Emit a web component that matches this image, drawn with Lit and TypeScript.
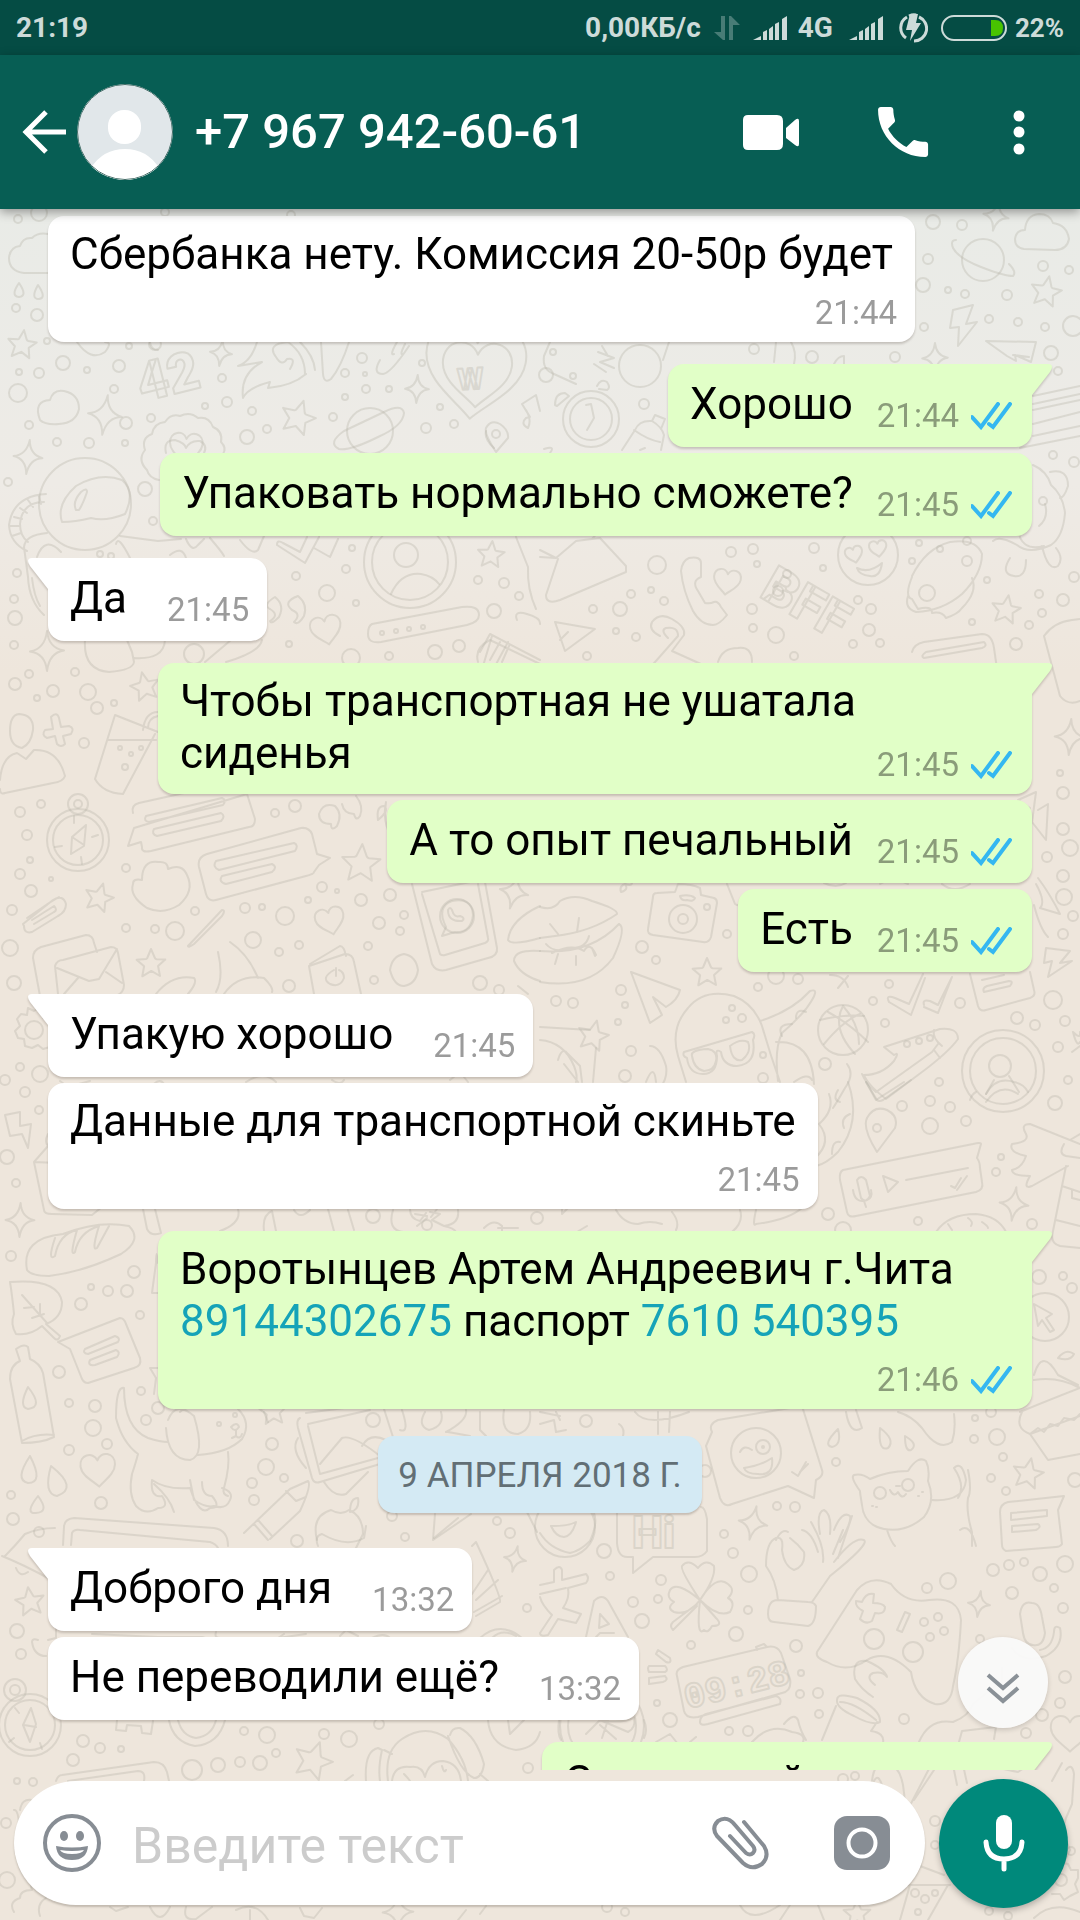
import { LitElement, html, svg, css } from "lit";
import { customElement, property } from "lit/decorators.js";
import { classMap } from "lit/directives/class-map.js";

type Part = string | { tel: string };

interface Message {
  out: boolean;
  text: Part[];
  time: string;
  tail?: boolean;
  stacked?: boolean;
  multiline?: boolean;
}

const BEFORE: Message[] = [
  { out: false, text: ["Сбербанка нету. Комиссия 20-50р будет"], time: "21:44", stacked: true },
  { out: true, text: ["Хорошо"], time: "21:44", tail: true },
  { out: true, text: ["Упаковать нормально сможете?"], time: "21:45" },
  { out: false, text: ["Да"], time: "21:45", tail: true },
  { out: true, text: ["Чтобы транспортная не ушатала сиденья"], time: "21:45", tail: true, multiline: true },
  { out: true, text: ["А то опыт печальный"], time: "21:45" },
  { out: true, text: ["Есть"], time: "21:45" },
  { out: false, text: ["Упакую хорошо"], time: "21:45", tail: true },
  { out: false, text: ["Данные для транспортной скиньте"], time: "21:45", stacked: true },
  {
    out: true,
    text: ["Воротынцев Артем Андреевич г.Чита ", { tel: "89144302675" }, " паспорт ", { tel: "7610 540395" }],
    time: "21:46",
    tail: true,
    stacked: true,
  },
];

const AFTER: Message[] = [
  { out: false, text: ["Доброго дня"], time: "13:32", tail: true },
  { out: false, text: ["Не переводили ещё?"], time: "13:32" },
  { out: true, text: ["Ссылку найду"], time: "13:35", tail: true },
];

/* Wallpaper: small rings, [x, y, radius] */
const RINGS: number[][] = [
  [18,219,4],[39,213,8],[165,212,4],[291,215,4],[16,308,4],[37,315,6],[47,341,3],[129,346,3],[155,344,6],[63,363,7],
  [87,370,3],[119,366,6],[19,372,3],[39,373,5],[18,393,9],[114,389,4],[29,425,4],[57,442,4],[89,443,5],[125,443,3],
  [126,423,6],[151,418,4],[205,406,3],[227,402,5],[252,411,4],[222,378,4],[362,358,5],[365,374,2],[345,373,4],[345,397,3],
  [366,389,4],[389,389,3],[422,363,3],[440,407,3],[454,424,4],[426,428,5],[333,417,4],[267,429,4],[247,437,7],[8,482,4],
  [145,489,7],[153,521,4],[17,573,4],[14,599,4],[15,618,7],[14,645,4],[296,576,4],[327,593,8],[356,603,3],[352,548,3],
  [346,569,4],[289,644,3],[478,580,4],[504,583,5],[494,611,7],[519,596,4],[435,652,7],[459,646,6],[389,656,4],[194,654,10],
  [351,658,9],[933,222,7],[962,225,5],[928,259,5],[923,285,7],[948,290,3],[965,294,4],[1007,295,5],[1043,266,5],[1069,270,4],
  [989,319,4],[1018,322,4],[1045,327,4],[924,327,4],[1073,326,10],[1051,353,7],[1058,371,4],[895,357,5],[812,357,6],[754,349,5],
  [553,352,3],[546,375,7],[573,376,3],[644,404,5],[1053,455,4],[1074,462,5],[919,543,3],[940,549,3],[967,541,4],[967,561,5],
  [912,561,3],[814,548,5],[823,568,3],[753,549,5],[731,552,5],[757,564,3],[657,565,9],[631,594,4],[651,590,3],[664,601,4],
  [620,609,7],[593,609,4],[616,631,3],[636,637,4],[752,609,5],[753,628,4],[776,635,8],[869,630,6],[871,609,5],[858,600,4],
  [853,644,4],[880,643,4],[987,580,3],[1074,577,5],[1039,594,4],[1063,600,6],[1042,613,4],[1029,625,4],[972,622,3],[1016,644,6],
  [587,656,4],[794,656,4],[29,674,4],[15,684,6],[53,691,6],[37,698,3],[75,672,4],[88,692,8],[97,708,6],[114,703,3],
  [84,743,5],[20,812,5],[41,804,4],[27,835,5],[30,860,3],[20,874,5],[51,879,2],[31,891,6],[12,910,5],[126,868,4],
  [126,928,4],[155,929,4],[175,931,9],[195,911,4],[245,908,5],[262,907,3],[285,916,9],[253,940,8],[279,952,4],[299,945,4],
  [322,887,5],[337,891,2],[308,900,3],[361,900,6],[390,895,6],[379,923,6],[404,915,4],[400,931,4],[368,946,4],[374,980,4],
  [289,986,6],[480,983,7],[499,990,5],[10,948,8],[14,983,7],[20,1067,4],[40,1074,8],[5,1080,5],[25,1092,5],[295,806,6],
  [275,813,4],[727,934,4],[642,947,6],[656,960,4],[556,1001,5],[573,1003,5],[621,990,5],[625,1005,3],[618,1022,3],[631,1051,5],
  [625,1076,6],[763,1078,5],[763,1055,3],[776,976,8],[798,979,5],[758,987,4],[889,984,4],[873,1001,4],[885,1023,4],[825,1064,6],
  [939,1082,4],[960,1003,5],[1053,1000,9],[1017,1018,6],[1035,1025,5],[1065,1021,5],[1058,1047,5],[1068,1080,4],[1060,773,3],[1063,793,6],
  [1063,829,6],[1070,848,8],[1047,857,5],[1063,876,6],[1064,897,8],[1073,916,5],[1063,934,5],[742,1018,4],[732,1008,3],[726,1020,3],
  [39,1110,4],[7,1157,7],[16,1183,4],[11,1256,5],[134,1272,6],[91,1287,3],[108,1291,5],[127,1291,6],[81,1304,6],[140,1315,4],
  [59,1372,6],[69,1403,4],[95,1406,6],[93,1428,8],[141,1391,4],[146,1420,5],[158,1408,6],[107,1444,5],[69,1450,5],[11,1495,4],
  [13,1519,6],[101,1503,6],[272,1444,6],[266,1467,8],[252,1483,5],[284,1478,4],[254,1500,5],[373,1216,7],[373,1420,7],[392,1516,5],
  [497,1521,4],[510,1533,5],[537,1218,6],[902,1106,5],[930,1101,5],[950,1107,5],[930,1126,8],[966,1121,5],[1055,1103,7],[1001,1157,3],
  [996,1172,4],[828,1214,6],[918,1221,4],[1032,1224,5],[1039,1277,7],[1063,1276,4],[1072,1288,5],[586,1421,6],[991,1412,5],[975,1418,3],
  [974,1439,4],[997,1437,8],[1003,1457,4],[991,1478,4],[1006,1491,4],[836,1462,4],[777,1506,4],[795,1507,5],[724,1534,4],[1075,1480,7],
  [705,1471,6],[17,1631,7],[21,1654,5],[83,1741,6],[100,1748,5],[121,1749,3],[73,1760,6],[17,1781,3],[33,1782,4],[192,1770,10],
  [218,1765,7],[240,1762,5],[260,1763,7],[276,1753,4],[267,1735,8],[244,1731,4],[324,1734,5],[349,1739,8],[379,1724,5],[528,1768,5],
  [405,1537,4],[297,1541,6],[527,1608,4],[6,1823,5],[7,1880,8],[604,1551,7],[733,1553,5],[610,1576,4],[661,1580,5],[633,1602,5],
  [658,1599,4],[642,1621,7],[748,1610,4],[749,1574,8],[736,1634,7],[796,1646,6],[801,1673,3],[800,1694,4],[818,1693,5],[819,1714,4],
  [904,1719,5],[729,1731,4],[748,1731,5],[670,1720,7],[657,1703,3],[691,1645,4],[927,1588,5],[948,1581,8],[993,1570,6],[1009,1565,5],
  [1024,1562,4],[1040,1574,7],[1065,1564,8],[1054,1588,4],[1012,1593,6],[1063,1608,5],[980,1639,4],[1065,1677,6],[1060,1703,5],[1042,1715,6],
  [1026,1733,5],[924,1622,4],[938,1617,4],[944,1631,4],[930,1637,4],[874,1639,10],[913,1652,10],[607,1907,5],[625,1912,4],[935,1821,5],
  [843,1779,5],[855,1776,4],[935,1845,4],[915,1893,4],[925,1899,4],[989,1911,4],[1008,1916,4],[1071,1851,4],[918,1912,3],[935,1893,3],
];

/* [x, y, scale, rotation] */
const STARS = [
  [22,345,15,8],[298,418,18,18],[1046,292,16,12],[491,555,14,6],[145,687,15,-12],[361,864,20,4],[99,898,15,16],
  [151,964,15,0],[707,973,15,0],[593,1036,16,14],[1006,610,15,10],[1028,1474,16,12],[30,1602,15,-8],[313,1761,20,20],[273,1412,14,-4],[857,1914,14,0],
];
const SPARKLES = [
  [221,353,13,8],[105,415,20,8],[28,457,17,6],[417,389,14,3],[47,651,20,0],[20,1220,17,2],[1014,1204,17,8],
  [753,1523,17,12],[515,1559,13,12],[979,1604,13,8],[1070,737,18,4],[514,892,17,14],[996,216,15,12],[935,358,15,0],[398,1912,18,0],
];
const HEARTS = [
  [326,629,16,-12],[330,920,15,-14],[98,1469,18,-4],[727,581,14,8],[1070,1732,20,0],[186,447,17,4],[477,372,36,3],[475,368,52,6],[854,554,9,-14],[878,548,9,-8],
];

const STAR = "M0-1 .27-.38Q.3-.33.38-.32L.95-.3.47.13.6.8.02.46-.58.82-.46.15-.96-.28-.34-.34Q-.28-.35-.25-.4Z";
const SPARKLE = "M0-1Q.08-.15.85-.02Q.12.08 0 1Q-.1.12-.85.03Q-.1-.12 0-1Z";
const HEART = "M0-.48C.22-1.02 1-.86.96-.2.92.34.3.66 0 .98-.3.66-.92.34-.96-.2-1-.86-.22-1.02 0-.48Z";

const place = (list: number[][], d: string) =>
  list.map(([x, y, s, r]) => svg`<path d=${d} transform="translate(${x} ${y}) rotate(${r}) scale(${s})" />`);

const ART = [
  /* clouds, drops, bolt */
  "M48 273H24Q9 271 9 258 10 247 20 246 23 237 32 238 38 232 48 234",
  "M19 283q-9 13 0 14 9-1 0-14zM38 285q-8 14 1 14 8-1-1-14z",
  "M1024 249q-9-1-9-10 1-9 10-9 1-15 14-16 11 0 14 9 14 2 16 16-2 11-14 11z",
  "M953 310l20-5-7 19 11-2-19 24 1-19-9 1z",
  "M986 341l50 1-5 20-16-7 1 6-9-5zM1013 355l16 2",
  "M40 420q-7-19 10-20 3-11 14-9 15 3 15 18-3 14-20 15-14 1-19-4z",
  /* rocket flames and trail */
  "M257 342q-6 20-19 24l24-4q-22 12-19 36 4-10 27-16l-2 6q24-2 38-14M288 342q-22 2-12 15 6 10 11 2 10-2 3 10M288 342q17 12 17 32M300 342q14 14 15 28M321 342l2 32q1 10 8 5 10-12 18-37M77 342q14 20 28 10 8-10 0-10M150 342q1 8 8 8",
  "M380 360q-8 14 3 14 8-1 26-28M397 342q-8 14-3 12M405 344q-6 12-2 10",
  /* scalloped badge */
  "M159 480q-10-2-12-10-10-10-2-20-4-12 7-16 2-11 13-12 6-9 15-6 10-5 18 2 11-2 15 9 10 4 8 15 6 6 2 12M166 453q-3-13 9-13 10 3 11 8 4-8 14-7 8 4 4 12",
  /* music note, pins */
  "M528 428q-8-4-2-10l4-1-8-13 14-9 4 16M528 428q4-8-2-18M496 452q-12-18-10-24 5-9 14-4 9 6 8 14z",
  "M877 1152q-15-24-10-34 7-13 20-8 12 6 8 18zM494 448q-10-9-8-17",
  /* planets */
  "M339 449q-12-6 5-18l40-19q18-9 20 1-1 13-26 24-28 14-39 12z",
  "M956 240q-6 0-3 8 5 10 28 19 23 9 32 9 4-4-4-12",
  /* astronaut */
  "M62 522q-6-18 14-36 24-14 46-6 14 12 3 34-20 8-34 4-16 4-29 4zM76 510q-4-8 5-18 6-5 6 0-4 12-8 18zM46 494Q13 496 9 525q1 18 18 26M44 502q-22 0-24 22 0 12 8 18M39 496l2 8M28 500l5 7M20 508l7 5M14 517l8 2M10 526h9M12 536l9-3M120 536l38 5 23-2M130 558q-12-24-14-14M47 533q-22 2-23 14l4 30q1 24 16 38M37 557q8-22 24-5M32 578q2 18 8 28",
  "M170 555q12-10 16 3M186 539q6 14 12 6l6-6M210 538q12 14 14 18M240 540q12 16 18 10l6-14M277 545l28 18 14-26M277 545q0-6 6-2l17 9 7-15M314 548l16 9 8-18",
  "M516 537l12 30q-1 22 8 42",
  /* plus badge */
  "M550 342l-6 14q-2 14 10 18l22 10M669 342l-6 18M598 352l16 6-14 4 14 6M602 346l6 10M594 364l12 8",
  /* alarm clock */
  "M586 405l5-1 3 14-7 12M555 405q0-12 10-12l4 3-12 10zM597 386q4-8 10-4 4 6 0 8l-8-1",
  "M622 450l13-20q4-10 17-9 10 6 12 14l-3 15M652 421l3-6 10 4-4 10M634 430q14 10 26 12M640 450l5-2M544 449q12-4 6 4",
  "M776 342l-2 20M791 342q6 10 3 22M834 364q4-8 10-8v8",
  "M1033 396l47-10M1033 410l47-10M1033 424l47-12M1033 436l47-10M1020 448l60-12M1033 404l47-10",
  /* bird */
  "M1033 465q14 6 18 20 12 10 14 28-2 24-14 32-22 10-34 0-18-10-24-4M1050 472q18-4 18 14-4 12-8 12M1045 504q4 14-6 22M1018 528q2 24 26 18M1010 558q-10 16 4 18 12 2 12-16M1042 546q6 26 16 20 6-8-2-18",
  /* handset */
  "M689 558q12-2 12 5v14q-10 4-3 14l7 12q5 1 9-1 4-1 7 5l6 8q-8 10-14 10-12 0-20-14-10-20-12-40 1-10 8-13z",
  "M540 557l16 1 20-17 24-3 26 28v6l-66 28q-14 5-14-5l12-36M592 539l12-14M556 558l-16-8",
  "M555 622l40 7-30 22zM560 640l8-8",
  /* hanger and ticket */
  "M660 636q-12-6-8-14 8-10 20-3 14 8 12 16l-12 16 40 18M668 638q-8-8-2-10 12-2 12 8l-30 34",
  "M718 662q4-14 20-14 14-2 14 14M912 652q2-8 12-10l58-8q10 0 12 14l4 28M926 652l58-10q4 4-2 6l-58 10q-4-2 2-6z",
  /* notepad and drinks */
  "M1044 636q10-14 28-16l8-1M1044 636l16 60q8 10 20 5",
  "M480 652l10-18 50 26M492 636l-12 40M508 642l-14 26M517 620q-4-10 10-6 14 4 13 10",
  /* quote marks, pill */
  "M275 597q10 8 4 20-8 8-9 4 10-6 0-12-8-4 5-12zM298 596q10 8 6 20-6 10-10 6 8-8-2-12-10-8 6-14z",
  "M372 624l90-17q17-2 17 8 0 7-12 10l-86 17q-13 2-13-8 0-8 4-10z",
  /* faces and toppings */
  "M857 568q12 6 25-5-2 15-12 13-11-1-13-8zM912 577q-8 20 0 22l6 10q14-4 14 4 10-2 14 5 12-4 16-10 16-16 10-30M908 596q-4 12 8 16 26-1 46-18 20-20 20-40-6-16-32-12-24 6-38 34",
  /* balloon, shoulders, plus */
  "M10 731q0-16 9-17 15 1 14 16-2 14-11 18-12-2-12-17zM0 780q2-24 17-27l9 6 8-9q24-1 31 26-2 6-12 7L5 793q-5 2-5-4",
  "M51 717q6-6 8 1l2 9 8-1q6 2 2 8l-8 2 2 8q-4 4-8 0l-2-8-8 2q-6-3-2-8l8-1z",
  "M115 715l43 17M115 715l-20 64q8 14 28 15l32-60M108 740h48M143 730q2-18 15-18M148 728q0-10 10-12",
  "M85 640q-2 30 24 32 24-2 25-10l-2-10-5-12M134 658q30 2 31-18M205 662l26-22M226 662q34-10 36-22",
  "M478 662q-4-14 12-22l50 24M490 660l10-18M502 662l7-16",
  /* compass */
  "M86 825l-2 21-13 8 1-17zM74 816v7M82 864l-1-7M55 847l7-1M98 835l-6 2M72 837l12 8",
  /* speech boxes */
  "M133 813q-2-8 6-10l108-24M247 794l8 25q0 8-6 8l-98 24q-10 2-9-4l-1-5-13 4 6-18zM146 816l76-18q5 2 1 7l-74 17q-6-1-3-6zM154 829l67-16q5 3 0 8l-64 15q-6-2-3-7z",
  "M199 867q-2-10 8-13l94-26q8-1 11 6l5 20 13 4-11 7-5 7q0 2-8 4l-90 24q-8 2-10-6zM216 861l78-18q5 2 1 8l-76 19q-7-3-3-9zM222 876l50-12q6 3 0 8l-46 12q-8-2-4-8z",
  "M142 880q0-20 16-18 10-1 10 7 14-6 19 6 8 16-8 30-16 10-32 3-18-12-14-24 0-6 9-4z",
  "M27 918l22-15q10-6 10-6M23 924l30-24q10-6 13 4 0 8-8 12l-26 16q-8 2-8-6zM32 920l22-14q4 4 0 6l-20 12",
  /* envelopes */
  "M40 996l-7-38q0-8 8-11l45-12q7 0 8 8l3 9M58 994l-3-28q2-6 8-6l48-13q6 0 7 6l6 32q0 8-8 11M57 968l32 13 10-2 18-30M64 994l14-16M106 972l16 11",
  /* propeller head */
  "M188 946l34-36q4 0 0 6l-28 28q-6 4-6 2zM218 952q6 26-2 40M230 942q18 12 28 36M156 994q16-20 38-16 4 4-6 16M224 994q14-20 40-16 10 10 8 14",
  "M310 964l30-18q4 0 6 10M314 994l-5-28 36-12q8 0 9 8l7 32M334 970q-14 8-4 14 10 4 14-6 0-6-5-8M336 968v8",
  /* quote marks 2 */
  "M335 806q8 8 2 20-6 6-6-2-12 0-12-10 4-12 16-8zM356 796q8 10 4 20-4 6-6-2-10 0-12-10M378 820q-2-14 6-14 6 4-6 14M386 802q-4 20 6 36",
  /* phone with messenger mark */
  "M412 884l20 80q4 8 14 6l42-12q10-2 9-10l-12-66M422 894l18 60q2 2 5 1l40-12q4-2 3-5l-10-54M422 892l48-10M404 954q-12 2-14 16 4 16 14 16 12-2 14-16-2-14-14-16",
  "M442 936l4-9q-10-20 6-26 20-4 21 14-2 18-18 17zM448 910q0 12 14 11 4-3-2-5-6 2-8-6-2-4-4 0",
  "M508 940q2-20 32-34M508 940q4 6 32-2M540 951q-26-2-26 10 6 14 26 20M528 994l-10-8",
  /* lips */
  "M540 907q14 4 20-6 14-8 32 0 26 8 25 13-26 18-62 22l-15 2M540 951q50 4 79-27 8 4-6 34-24 32-73 24M550 924l8 10M579 918l-2 14M546 944q8 10 26 4 14 0 17-12M552 953q20-10 32-2 6-10 12 4M558 954l-3 10M576 956v9M592 948l3 8",
  /* camera */
  "M657 893l18-1 3-8q14 0 22 4l1 7 13 3q3 1 3 5l-6 34q-2 6-8 5l-50-7q-6-1-5-6l5-32q0-4 4-4zM680 896q10-2 15 2-1 4-8 2-6 1-7-4z",
  "M621 892q8-2 4-8 10 4 6-7M625 884q-6 2-4 8M727 884l8 20q6 4 12-4M824 883q12 6 22 0M880 884q12-8 28 0M942 884q12 10 28 0",
  "M631 972l49 18q-2 10-14 17l-13-10 9 18-12 8zM830 975q14 0 18 12M838 988l10-12",
  "M889 1002l22 13 14-37M889 1002q-4-8 6-4l14 6 14-30M924 1005q-2-6 6-4l8 4 14-28M924 1007l14 6 14-36",
  "M970 974l8 32q2 6 8 4l44-12q6-2 4-8l-4-18M982 980l22-5M984 992l26-6q4-5-1-5l-22 5q-5 2-3 6z",
  "M1046 948l24 3-10 12 12-2-24 16 4-16-8 2zM1036 884q10 18 4 24l20 6q-10-20-22-36M1034 905q6 24 14 32",
  "M1030 808l-12-8 18-8-4 30 14 18 2-36-10 6",
  /* dancer in sunglasses */
  "M686 1082l-8-26q-8-28 10-48 16-20 46-12 20 8 28 30 8 28 18 56M760 1021q32-10 50-30 12-4-4 18-12 14-24 24-8 16-4 48M776 1042q36-2 38 42M684 1052l68-20q4 2 1 8 4 24-16 26-14 0-16-14-6-4-4 4 0 18-14 18-14 0-16-16-5-2-3-6zM692 1056q-2-6 16-7 10 2 8 12-2 10-12 10-10-2-12-15zM730 1046q10-8 18-4 4 10-6 18-10 2-12-14zM650 1046q10 0 16 20 2 12-6 22M646 1082q8-20 10 0M812 1080q-4-8-18 2",
  "M782 1036q-6-12 10-12M796 1018q0-10 10-6",
  "M540 1027l50 3M596 1048l-3 34M540 1040q24 2 34 26 4 10 2 16M558 1060q4-14 10-6l12 12 2 16M564 1064l14 18",
  /* ball */
  "M843 1006q-12 22 12 48M820 1020q24-6 44-4M824 1044q20-24 36-30M828 1012q22 12 40 30M843 1006q16 18 16 38",
  /* shoe */
  "M884 1047l56-18q18-2 18 10-10 14-40 36l-32 24q-18-14-22-24 18 0 30-14 6-10 0-6zM934 1030q-2 8 8 16M862 1074q4 10 14 18l56-40 6-8M934 1050l6 8",
  "M1073 1032q8 8 7 0M1073 1032q4 16 7 10M1072 1052l8-6",
  "M986 1102q14-20 32-8M970 1100q2-6 6-8M847 1064q8 10-2 24-8 14-12 20M866 1082l10 18 28-18M1019 1092l-10-16M986 1094l8-14",
  /* gear */
  "M28 1008l6 3 5-3 5 4-1 6 8-1 5 3-2 7 5 5-3 7-6 1 0 7-7 2-5-4-6 3-7-2-1-7-6-1-3-7 5-5-3-7 4-5 6 1z",
  "M60 1081l8 6 22-6M154 1084q6-6 10 0M246 1082q18-12 30 0M332 1080q8 6 12 0M450 1080l10-8 8 10",
  /* milk carton, bolt, snake */
  "M5 1115l15-3 0 14 11-2-3 24-6-14-12 2zM48 1146l-14 16 48 2M34 1162l10 48q0 4 8 4l40 1 10-8M48 1134q-4 8 0 12",
  "M829 1094q6 16-10 30 14 18-4 34M848 1082q14 40-10 70-12 12-22 14M838 1090q-6 10 2 12M850 1114q-10 4-6 14M840 1142q-8-2-8 12",
  "M866 1082l11 18q2 2 6 0l28-20",
  /* voice message */
  "M843 1170l130-26q8-2 8 0l-4 14q3 4 3 10l2 14q2 8-6 10l-120 24q-8 2-9-4l-7-32q-1-8 3-10zM857 1180q4-6 9 0l4 16q-4 8-9 2zM853 1190q2 14 14 10 6-2 4-10M864 1201l2 6M883 1176l15 6-10 10zM906 1180l62-12M951 1186l4 2 6-10M957 1190l10-14",
  "M1080 1144l-50-20q-10 0-4 10 4 8-14 10-4 8 14 12-4 12-14 14 0 6 18 6-8 14 2 10l36-20M1064 1144q-6 10 2 12l14 2M1070 1140l10-6M1066 1166l-14 70q0 8 8 10l20 2M1062 1186l18 6M1056 1220l24 6M1072 1190v8l8 2",
  "M936 1232q12-18 40-18 22 2 30 18M948 1224l4 6M968 1218q6 4 3 8M982 1222q6 4 6 6",
  "M616 1210q8 14 22 14 12-4 24 0M672 1212q8 10 4 18M740 1210q4 12-8 22M756 1210q-4 18 0 14 32-4 46-16M562 1214l6-6M562 1214v-8M577 1232l10-6",
  "M143 1209l4 20q4 8 14 4M155 1209l6 24M238 1209q4 14-18 22M264 1231q-2-16 8-20l4 20M294 1210q6 10 16 0M328 1209l6 22M348 1210l6 20M393 1210q-6 20 10 22M410 1209q0 10 10 12l6-8M430 1212l10 2-8 6 12 6M427 1216l-12-2M427 1218l-10 8M437 1209l-6 8M458 1210q2 14-14 16 10 2 12 6M484 1228q10-10 18-2v6M498 1228h20",
  /* bread */
  "M27 1270q-6-32 36-36 36-14 66-8 14 14-8 28-38 18-72 22-18 0-22-6zM55 1238q-8 24 0 18 4-22 22-26-8 28-2 22 4-20 24-26-8 26-2 22l12-22",
  /* leaf */
  "M10 1282q48-4 52 20 0 16-16 22l14 12q-2 6-6 2l-12-12q-12 10-26 8-6-10-2-20-2-20-4-32zM22 1295l25 28M32 1318l12-4M24 1308l10-1M40 1316v-12",
  "M58 1342l62-24q4 0 6 6l14 34q2 8-6 10l-46 15q-4 0-6-4l-12-30zM85 1349l30-13q6 2 3 6l-30 12q-6-1-3-5zM90 1360l26-10q5 2 1 7l-22 8q-8 1-5-5z",
  "M158 1263q-2-18-2 0l-4 30h6M158 1368h-8l6 10-2 16",
  /* bottle */
  "M20 1361l-4-12q8-6 12-2l2 12q10 4 13 14l11 64q-12 6-32 6l-12-64q0-14 10-18zM28 1387q-10 20 0 22 16-2 0-22zM22 1441q14-8 32-6",
  /* drops */
  "M30 1456q-16 24-2 27 16 0 2-27zM51 1466q-8 28 6 30 22-8-6-30zM38 1496q-14 18-2 17 14-1 2-17z",
  /* dog */
  "M116 1418q0-32 8-30 0 40 24 50 12 4 20 4M116 1418q6 24 22 36-2 8-6 20-4 20 4 32 10 10 22 2 12 0 4-12-12 2-10-16 14 10 38 8 10 30 20 20 12 0 2-12-10 0-10-14M154 1484q16 14 20 28M190 1480q2 10 4 20 12 8 20 6 12 4 16-6 4-8-8-12M228 1452q2 14-4 36-2 6 4 8M168 1420q8-20 26-4 12 40-4 44-22 0-24-32M180 1412q4-4 8-4M198 1455q30-2 44-16 10-16-4-30M231 1427q6-6 8 0-4 6-8 0M236 1430v6q4 4 6-2M232 1438l4-2",
  "M264 1412l4 10",
  /* photos */
  "M384 1409l16 50M306 1413l46-6M300 1418q-4 2-2 10l14 50q2 6 8 4l60-18M308 1424l62-14M308 1426l12 48 58-16M320 1464l22-26q10-4 38 18M362 1446q8-14 24-6M298 1438q-8 12 8 30M324 1482q10 16 22 12l22-22",
  "M425 1412q-8 14 4 18 16-4 12-18M402 1410q8 24-2 20M480 1412v18l6 6M446 1432q22-12 20-22M504 1410q-4 24 14 24 14-4 12-22M448 1432l22 4",
  /* pencil and apple */
  "M244 1533l46-44 18-8q4 4-8 30l-30 28M286 1491l10 10 10-4M254 1524l14 16M258 1520l14 16M317 1540q-6-24 14-30 10 6 18 0 14 6 14 24l-10 20M350 1512q0-14 8-14 2 12-8 14",
  "M435 1514l-2 26 38-26M527 1512l10 20",
  /* winking message */
  "M540 1424l14-4 2 12 10-2M540 1412l20 4M556 1412l4 8M712 1432q-4-8 6-12l84-14 20 64q2 6-6 10l-2 18-26-12-56 18q-8 4-12-6l-14-52zM740 1452q4-8 12-2M744 1468q16-2 28-10 2 18-14 16-12 0-14-6zM792 1472l6 4 8-14M800 1472l8-8",
  "M635 1412q12 16 54 0M658 1412v22M670 1412l-1 20M619 1424q6 4 4 12M846 1412q4 24 16 16l-6-18M898 1412q14 4 24 16 16 24 30 14 4-12 2-28",
  "M838 1429q-16 16-6 18 10-2 6-18zM880 1428q-2 24 8 20 8-8-8-20zM905 1436q0 16 6 14 8-6-6-14z",
  /* cat */
  "M862 1505q-2-12-2-14-10-14-6-16 8-2 16 4 18-8 38-8 10-16 18-10 4 8 2 20 8 20-4 36-18 16-40 12-20-4-22-24zM890 1490q4 8 8 2 4 8 8 2M896 1486h4M932 1500q32 2 34-20-4-20-12-12 12 18 4 30M968 1470q4 20 0 28-2 14 4 34v14M872 1506h1M876 1507h1M918 1496h1M922 1492h1M887 1530q4 12 8 16M960 1530q10-8 16 16",
  /* cupcake */
  "M1034 1375q8-28 24 0l20 10M1034 1380q24-4 46 8M1020 1412q34-14 60-24M1022 1412q-8 16 8 22l50-18M1030 1434l18 26 32-6M1030 1434l8-6 6 4 6-8 8 2 6-8 10 2 6-6M1058 1358q8-10 16-4-4 8-16 4",
  /* arrow badge */
  "M1034 1304l18 10-6 4 8 12-4 2-8-12-4 6z",
  /* greeting bubble, ring, notes */
  "M617 1513v30q1 14 10 14h6v16l20-16h42q8 0 12-6v-32q-2-12-6-12M594 1513q4 10-4 28-10 10-20 12-20-4-30-20M551 1526q18 0 25-4-4 14-12 15-8 0-13-11",
  "M1000 1512q0-8 8-10l56-6-6 14 4 34q-2 3-6 3l-50 4q-4-2-4-6zM1011 1513l36-3v6l-36 4zM1012 1526l26-2q4 3-2 6l-24 2z",
  "M5 1556q10-10 20-22 14-6 30-6M2 1556q20 8 46 22M16 1568q4 10 12 4M63 1545l1-18q0-8 10-9l140 10q14 2 14 18M71 1545l1-12q2-4 8-3l130 12q6 2 8 6",
  "M318 1546q-4-10 4-12 24 14 42 4l2-12M434 1538l24-20M472 1546l4-4q26 56 24 60l-24 14M472 1594l16-24M474 1612l28-16M476 1600l22-20",
  "M38 1640q-6-2-6 2 2 14 14 14M56 1628v10l-8 2M92 1634l66 3 44 0 10 3M216 1632q-2 6 4 6M284 1634l-6 4 28-4M340 1636l6-6 12 6M372 1638q12-6 18 0M480 1638q20-18 42 0M492 1638q10-10 24-2",
  /* compass needle, bone, rings, penguin */
  "M31 1708l5 16-6 18-7-17zM24 1725l12 2M15 1708l4 5M42 1749l-2-6M9 1742l5-4",
  "M117 1720l-1 10 10 1 1-6 14 1 1 7 9 1 2-13M169 1720q4 22 26 26 24-2 30-26M178 1720q4 16 18 18 16-2 20-18M488 1720q2 26 28 30 20-2 24-18M508 1720l2 14 14-14",
  "M366 1781q-2-30 12-33l4 2q-4 18-2 31M388 1781q-4-30 14-42 24-16 46 0 18 20 20 42M392 1781q2-16 18-14 12-2 15 10 4-16 18-16 16 2 18 20M450 1735q2-8 10-7 16 8 24 36-2 14-10 14-14-6-26-42M404 1774q4 4 6 7M442 1766q2 8 4 4M480 1774l8 7M384 1750l8 4",
  "M56 1781q2-6 6-6l92-13q10 0 13 10l2 9M68 1781l70-10q8 0 6 10M345 1781l8-6",
  "M20 1848q0-40-6-38M20 1810q2-12 12-10M14 1912q-6-10 6-14 0-8 12-8-4-8 10-12M40 1916q-4-12 6-18M110 1907l6 4 12-4M150 1907q10 20 20 0M186 1907q-4 14 10 12l16-12M236 1910q20-10 32 10M250 1910v10M300 1908l4 8 10 2 8-10M466 1910l-8 10M480 1914l6-8",
  /* translation sign */
  "M540 1585l14-3v-12q6-6 8 0v10l24-6q4 4 0 9l-18 5q2 10-5 20l18 6-5 9-18-4-10 16q-8 2-8-2l12-18q-10-10-12-18M540 1594l26-6M586 1637l8-36q8-8 14 0l20 36M600 1614l9 10-10 4zM596 1637l4-4 14 0",
  /* clover */
  "M700 1600q-20-30-18-34 6-8 16 2 8-10 16-2 2 12-14 34zM700 1600q-24-20-30-10-4 8 4 12-8 6 0 10 14 4 26-12zM700 1600q16-26 28-16 8 6 0 14 8 4 2 14-12 6-30-12zM700 1600q-4 38 4 30 4 4 8-4 12 0 4-8zM697 1606l-24 24q-4-4 0-8l24-18",
  "M658 1650l12 8q2 6-4 4l-10-8zM649 1666h16q4 4 0 6h-16q-2-4 0-6zM649 1678l16-2q4 4-2 6l-14 2z",
  /* hand */
  "M778 1600q-2-20-12-34 0-24 10-28 8-2 6 12 2 16 12 20 12-4 10-18-6-8-14-14M778 1600q-10 0-10 14 0 8 6 8l34 4q8-2 8-20-2-4-8-4zM812 1602l18-26q40-32 34-36-10-4-30 22M833 1554l10-24M818 1552q-6-20-16-22M823 1562q2-16-12-40M838 1558l14-42M776 1540q6-12 12-8M820 1534q-4-22 4-24 8 4 6 24M834 1530q8-20 16-14 2 6-10 26",
  /* gamepad */
  "M817 1652l40-62q14-16 34-6 14 20 38 16 30-4 32 20-2 40-8 66-2 20-18 18-20-6-24-32-24-24-44-12-20 14-40 2-12-4-10-10zM862 1602q4-10 12-8l-1 9q10 0 12 4 0 8-10 6l-3 8q-6 4-12-2l3-8q-8-4-7-10zM897 1630l8-18 5 2-8 18z",
  /* digital clock */
  "M677 1676q-2-6 6-9l84-20q10-2 14 6l9 26q2 12-8 14l-84 24q-12 2-14-6zM757 1650l-1-3 8-3 3 3M700 1722q0-6 6-8l70-18q6 2 4 8l-72 20q-8 2-8-2z",
  /* jar */
  "M837 1700q0-8 20-2 24 12 23 24-8 4-26-6-18-8-17-16zM840 1702q14 0 36 18M836 1706l-14 34M877 1722l-6 9q14 2 12 12M873 1697q-12-8-18-18-4-20 12-18 18 8 20 16-4-6-14-4-8 4 2 12M752 1742q18-20 40-10 16 2 10 12M784 1724q10-12 14-4 2 10 8 20M656 1742l14-8 8 10M690 1742l6-5",
  /* microphone */
  "M1020 1614q2-14 12-11 8 0 10 14l3 16q-2 14-12 12-8 0-10-12zM1012 1648q10 16 34 8 18-10 14-28-6-4-6 4-2 16-14 18",
  "M919 1742q10-24 34-20 16-6 20-18l22-18M959 1742l3-11 34-4-2 12M1002 1668v24",
  "M559 1720q-2 14 2 20M644 1720q4 10 0 18M608 1720l-6 18M600 1720l-14 14M600 1720q20 4 34-2 2 10-6 14zM600 1725l16 14",
  /* shapes behind the composer */
  "M872 1781q2-20 16-18 14 4 16 30 2 12-6 16M874 1781q4-8 8 4M914 1800l24-36M905 1815l26-50M953 1765l4 20M963 1765l4 18M990 1766q18 4 28 6l12-8M1066 1770q6-8 8 4l-2 30-6 14-4 14 8 18-10 20M1052 1781l10-18M920 1866l24 9M900 1885h50M910 1885l-10 35M948 1885l-20 35M1060 1862l8 2 3 6 7 0v8l-3 6 3 8-8 4-6 4-4-6-8 0M1034 1918q18-18 46-6M740 1905q10 20 40 0M790 1905l-10 15M818 1905l6 15",
];

const CIRCLES = [
  [370,431,23],[983,260,21],[496,434,4],[85,504,46],[591,419,28],[591,419,21],[640,366,21],[410,562,46],[410,562,38],[406,555,12],
  [868,555,30],[1043,501,4],[778,591,5],[787,574,4],[78,840,31],[78,840,25],[78,804,10],[78,804,4],[457,916,17],[683,919,14],[683,919,5],
  [707,907,3],[843,1030,25],[1003,1071,41],[1003,1071,33],[1000,1066,11],[34,1030,9],[877,1128,4],[1045,1317,24],[756,1453,25],[763,1447,7],
  [763,1447,1],[880,1493,6],[908,1485,6],[219,1424,2],[235,1415,2],[427,1225,5],[30,1725,31],[30,1725,25],[15,1690,11],[15,1690,5],
  [602,1726,42],[602,1726,34],[565,1527,30],[39,1532,5],[120,748,2],[131,754,2],[141,748,2],[125,767,3],[382,633,2],[396,631,2],[409,629,2],[423,627,2],
  [100,554,3],[111,556,3],[907,1044,3],[919,1041,3],[930,1038,3],[927,593,8],[1061,1880,6],[843,1230,8],
];

@customElement("chat-wallpaper")
export class ChatWallpaper extends LitElement {
  static styles = css`
    :host { display: block; background: linear-gradient(#e9ebe7, #eeebe6 16%, #eee6dc 27%, #eee6dc); }
    .art { display: block; width: 100%; height: 100%; }
    .lines { fill: none; stroke: #b5b2a6; stroke-opacity: 0.34; stroke-width: 2; stroke-linejoin: round; stroke-linecap: round; }
    .lines * { vector-effect: non-scaling-stroke; }
    .letters { font-family: Roboto, "Liberation Sans", sans-serif; font-weight: 900; }
    .digits { font-family: "Liberation Mono", monospace; font-weight: 700; }
  `;

  render() {
    return html`<svg class="art" viewBox="0 209 1080 1711" preserveAspectRatio="xMidYMin slice" aria-hidden="true">
      <g class="lines">
        ${RINGS.map(([x, y, r]) => svg`<circle cx=${x} cy=${y} r=${r} />`)}
        ${CIRCLES.map(([x, y, r]) => svg`<circle cx=${x} cy=${y} r=${r} />`)}
        ${place(STARS, STAR)} ${place(SPARKLES, SPARKLE)} ${place(HEARTS, HEART)}
        ${ART.map((d) => svg`<path d=${d} />`)}
        <path d="M391 594q10-22 30-20 12 2 18 10M986 1094q10-18 28-12 10 2 14 10" />
        <text class="letters" font-size="54" transform="translate(142 402) rotate(-14)">42</text>
        <text class="letters" font-size="30" transform="translate(458 390) rotate(-3)">W</text>
        <text class="letters" font-size="52" transform="translate(758 596) rotate(30)">BFF</text>
        <text class="letters" font-size="44" transform="translate(632 1548)">Hi</text>
        <text class="digits" font-size="36" transform="translate(687 1709) rotate(-14)">09:28</text>
      </g>
    </svg>`;
  }
}

@customElement("chat-message")
export class ChatMessage extends LitElement {
  @property({ attribute: false }) message!: Message;

  static styles = css`
    :host { display: block; }
    .row { display: flex; padding: 0 48px; }
    .row.out { justify-content: flex-end; }
    .bubble {
      position: relative;
      display: flex;
      align-items: flex-end;
      box-sizing: border-box;
      max-width: calc(100% - 110px);
      padding: 14px 18px 17px 22px;
      border-radius: 16px;
      background: #fff;
      color: #000;
      filter: drop-shadow(0 2px 1px rgba(70, 60, 50, 0.24));
    }
    .out .bubble { padding-right: 20px; background: #e1ffc7; }
    .in.tail .bubble { border-top-left-radius: 0; }
    .out.tail .bubble { border-top-right-radius: 0; }
    .multiline .bubble, .stacked .bubble { flex-direction: column; padding-top: 12px; padding-bottom: 15px; }
    .multiline .bubble { width: 100%; }
    .text { margin: 0; font-size: 44px; line-height: 52px; }
    .stacked .text, .multiline .text { align-self: flex-start; margin-right: 4px; }
    .text a { color: #15a3b8; text-decoration: none; }
    .meta { display: flex; align-items: center; flex: none; gap: 12px; height: 33px; margin: 0 0 -2px 40px; font-size: 33px; line-height: 38px; color: #9b9b9b; }
    .out .meta { margin-left: 24px; color: #8a9c7a; }
    .stacked .meta { padding-top: 16px; }
    .multiline .meta { margin-top: -31px; }
    .ticks { width: 41px; height: 28px; display: block; }
    .beak { position: absolute; top: 0; width: 20px; height: 31px; }
    .in .beak { right: 100%; transform: scaleX(-1); }
    .out .beak { left: 100%; }
  `;

  render() {
    const m = this.message;
    const classes = {
      row: true,
      in: !m.out,
      out: m.out,
      tail: !!m.tail,
      stacked: !!m.stacked,
      multiline: !!m.multiline,
    };
    return html`<div class=${classMap(classes)}>
      <div class="bubble">
        ${m.tail
          ? html`<svg class="beak" viewBox="0 0 20 31" aria-hidden="true">
              <path d="M0 0H16Q20 0 20 3Q20 5 18 8L0 31Z" fill=${m.out ? "#e1ffc7" : "#fff"} />
            </svg>`
          : null}
        <p class="text">${m.text.map((p) => (typeof p === "string" ? p : html`<a href="tel:${p.tel.replace(/ /g, "")}">${p.tel}</a>`))}</p>
        <div class="meta">
          <time>${m.time}</time>
          ${m.out
            ? html`<svg class="ticks" viewBox="0 0 41 28" role="img" aria-label="Прочитано">
                <path d="M1 15L10 25L27 2M18 22L22 25L39 2" fill="none" stroke="#34b7f1" stroke-width="4" stroke-linejoin="miter" stroke-linecap="round" />
              </svg>`
            : null}
        </div>
      </div>
    </div>`;
  }
}

const signal = () => svg`<path d="M0 24L8 20V24ZM10 24V16L14 14V24ZM16 24V13L20 10V24ZM22 24V8L26 6V24ZM29 24V3L34 0V24Z" fill="#cddbd9" />`;

@customElement("app-root")
export class AppRoot extends LitElement {
  static styles = css`
    :host { display: block; height: 100vh; font-family: Roboto, "Liberation Sans", sans-serif; }
    .app { position: relative; display: flex; flex-direction: column; height: 100%; overflow: hidden; }
    button { display: flex; align-items: center; justify-content: center; flex: none; margin: 0; padding: 0; border: 0; background: none; color: inherit; cursor: pointer; }
    svg { display: block; flex: none; }

    .status { display: flex; align-items: center; height: 55px; box-sizing: border-box; padding: 0 16px; background: #054c44; color: #cddbd9; font-size: 28px; font-weight: 700; line-height: 32px; flex: none; }
    .clock { margin-right: auto; }
    .speed { margin-right: 13px; }
    .updown { margin-right: 13px; }
    .net { margin: 0 16px 0 11px; }
    .bolt { margin: 0 13px 0 15px; }
    .level { margin-left: 8px; font-size: 26px; }

    .header { position: relative; z-index: 2; display: flex; align-items: center; height: 154px; flex: none; box-sizing: border-box; padding: 0 31px 0 22px; background: #075e54; color: #fff; box-shadow: 0 3px 10px rgba(0, 0, 0, 0.38); }
    .back { margin-right: 11px; }
    .avatar { border-radius: 50%; overflow: hidden; }
    .peer { margin: 0 auto 0 22px; font-size: 49px; font-weight: 500; line-height: 60px; white-space: nowrap; }
    .video { margin-right: 72px; }
    .call { margin-right: 56px; }

    .body { position: relative; display: flex; flex-direction: column; flex: 1; min-height: 0; }
    .wallpaper { position: absolute; inset: 0; }
    .thread { position: relative; flex: 1; min-height: 0; overflow: hidden; }
    .list { display: flex; flex-direction: column; gap: 6px; margin: 0; padding: 7px 0 0; list-style: none; }
    .turn { margin-top: 16px; }
    .day { display: flex; justify-content: center; padding: 21px 0 29px; }
    .chip { padding: 18px 20px 15px; border-radius: 16px; background: #d4eaf4; color: #626f75; font-size: 35px; line-height: 44px; box-shadow: 0 2px 2px rgba(70, 60, 50, 0.24); }
    .jump { position: absolute; right: 32px; bottom: 42px; width: 90px; height: 91px; border-radius: 50%; background: rgba(250, 250, 250, 0.94); box-shadow: 0 2px 5px rgba(0, 0, 0, 0.16); }
    .jump svg { margin-top: 10px; }

    .composer { position: relative; display: flex; align-items: center; gap: 14px; height: 150px; box-sizing: border-box; padding: 0 12px 4px 14px; flex: none; }
    .field { display: flex; align-items: center; flex: 1; min-width: 0; height: 124px; box-sizing: border-box; padding: 0 35px 0 28px; border-radius: 62px; background: #fff; box-shadow: 0 2px 2px rgba(70, 60, 50, 0.26); }
    .entry { flex: 1; min-width: 0; margin: 0 16px 0 30px; padding: 6px 0 0; border: 0; outline: 0; background: none; font: 400 50px/58px Roboto, "Liberation Sans", sans-serif; color: #000; }
    .entry::placeholder { color: #ccc; opacity: 1; }
    .attach { margin-right: 64px; }
    .mic { width: 129px; height: 129px; border-radius: 50%; background: #00897b; box-shadow: 0 3px 6px rgba(0, 0, 0, 0.25); }
  `;

  private renderMessages(list: Message[], startsDay: boolean) {
    return list.map((m, i) => {
      const turn = !!m.tail && !(startsDay && i === 0);
      return html`<li class=${classMap({ turn })}><chat-message .message=${m}></chat-message></li>`;
    });
  }

  render() {
    return html`<div class="app">
      <div class="status">
        <span class="clock">21:19</span>
        <span class="speed">0,00КБ/с</span>
        <svg class="updown" width="26" height="24" viewBox="0 0 26 24" aria-hidden="true">
          <path d="M7 0H11V24H9L0 16H7ZM15 24V0H17L26 9H19V24Z" fill="#487c76" />
        </svg>
        <svg width="34" height="24" viewBox="0 0 34 24" aria-hidden="true">${signal()}</svg>
        <span class="net">4G</span>
        <svg width="34" height="24" viewBox="0 0 34 24" aria-hidden="true">${signal()}</svg>
        <svg class="bolt" width="30" height="30" viewBox="0 0 30 30" aria-hidden="true">
          <path d="M9 4A12.500 12.500 0 0 0 8 25M21 4A12.500 12.500 0 0 1 16 28M11 3Q15 1 18 2" fill="none" stroke="#cddbd9" stroke-width="3" />
          <path d="M12 1H20L18 10H23L12 28L14 17H8Z" fill="#cddbd9" />
        </svg>
        <svg width="66" height="26" viewBox="0 0 66 26" aria-hidden="true">
          <rect x="1" y="1" width="64" height="24" rx="12" fill="none" stroke="#cddbd9" stroke-width="2" />
          <path d="M50 5H54Q62 5 62 13Q62 21 54 21H50Z" fill="#48c400" />
        </svg>
        <span class="level">22%</span>
      </div>

      <header class="header">
        <button class="back" aria-label="Назад">
          <svg width="44" height="44" viewBox="0 0 44 44" aria-hidden="true">
            <path d="M24 2L4 22L24 42M3 22H44" fill="none" stroke="#fff" stroke-width="5" />
          </svg>
        </button>
        <svg class="avatar" width="96" height="96" viewBox="0 0 96 96" role="img" aria-label="Фото контакта">
          <circle cx="48" cy="48" r="48" fill="#e1e7ea" />
          <rect x="31" y="26" width="33" height="34" rx="16" fill="#fff" />
          <path d="M14 84Q26 65 48 65Q70 65 82 84L70 96H26Z" fill="#fff" />
          <circle cx="48" cy="48" r="47.500" fill="none" stroke="#3f6a64" stroke-width="1" />
        </svg>
        <h1 class="peer">+7 967 942-60-61</h1>
        <button class="video" aria-label="Видеозвонок">
          <svg width="60" height="60" viewBox="0 0 60 60" aria-hidden="true">
            <path d="M7 13H36Q42 13 42 19V42Q42 48 36 48H7Q2 48 2 43V18Q2 13 7 13ZM45 26L54 18Q58 15 58 19V42Q58 46 54 43L45 36Z" fill="#fff" />
          </svg>
        </button>
        <button class="call" aria-label="Аудиозвонок">
          <svg width="60" height="60" viewBox="0 0 60 60" aria-hidden="true">
            <path transform="translate(-3.300 -3.300) scale(2.780)" d="M6.620 10.790c1.440 2.830 3.760 5.140 6.590 6.590l2.200-2.200c.270-.270.670-.360 1.020-.240 1.120.370 2.330.570 3.570.570.550 0 1 .450 1 1V20c0 .550-.450 1-1 1-9.390 0-17-7.610-17-17 0-.550.450-1 1-1h3.500c.550 0 1 .450 1 1 0 1.250.200 2.450.570 3.570.110.350.030.740-.250 1.020l-2.200 2.200z" fill="#fff" />
          </svg>
        </button>
        <button class="more" aria-label="Ещё">
          <svg width="60" height="60" viewBox="0 0 60 60" aria-hidden="true">
            <g fill="#fff"><circle cx="30" cy="14" r="5.500" /><circle cx="30" cy="30" r="5.500" /><circle cx="30" cy="47" r="5.500" /></g>
          </svg>
        </button>
      </header>

      <main class="body">
        <chat-wallpaper class="wallpaper"></chat-wallpaper>
        <div class="thread">
          <ul class="list">
            ${this.renderMessages(BEFORE, false)}
            <li class="day"><span class="chip">9 АПРЕЛЯ 2018 Г.</span></li>
            ${this.renderMessages(AFTER, true)}
          </ul>
          <button class="jump" aria-label="К последнему сообщению">
            <svg width="34" height="32" viewBox="0 0 34 32" aria-hidden="true">
              <path d="M2 3L17 16L32 3M2 16L17 29L32 16" fill="none" stroke="#8a9197" stroke-width="4" />
            </svg>
          </button>
        </div>
        <form class="composer">
          <div class="field">
            <button type="button" aria-label="Эмодзи">
              <svg width="60" height="60" viewBox="0 0 60 60" aria-hidden="true">
                <circle cx="30" cy="30" r="27" fill="none" stroke="#878d94" stroke-width="4" />
                <ellipse cx="22" cy="23" rx="4" ry="5" fill="#878d94" /><ellipse cx="38" cy="23" rx="4" ry="5" fill="#878d94" />
                <path d="M14 33Q30 36 46 33Q45 47 30 47Q15 47 14 33ZM18 37Q20 41 30 41Q40 41 42 37Q30 39 18 37Z" fill="#878d94" fill-rule="evenodd" />
              </svg>
            </button>
            <input class="entry" type="text" aria-label="Введите текст" placeholder="Введите текст" />
            <button type="button" class="attach" aria-label="Прикрепить">
              <svg width="58" height="54" viewBox="0 0 58 54" aria-hidden="true">
                <path d="M18 20L34 37Q38 40 41 37Q44 34 41 30L23 9Q15 -1 6 5Q-1 12 5 20L31 47Q40 55 50 48Q58 40 52 30L32 6" fill="none" stroke="#878d94" stroke-width="4" stroke-linecap="round" stroke-linejoin="round" />
              </svg>
            </button>
            <button type="button" aria-label="Камера">
              <svg width="56" height="54" viewBox="0 0 56 54" aria-hidden="true">
                <rect width="56" height="54" rx="13" fill="#878d94" />
                <circle cx="28" cy="27" r="13.500" fill="none" stroke="#fff" stroke-width="4" />
              </svg>
            </button>
          </div>
          <button type="button" class="mic" aria-label="Голосовое сообщение">
            <svg width="42" height="58" viewBox="0 0 42 58" aria-hidden="true">
              <rect x="13" y="1" width="16" height="34" rx="8" fill="#fff" />
              <path d="M3 28Q4 45 21 45Q38 45 39 28M21 45V55" fill="none" stroke="#fff" stroke-width="5" stroke-linecap="round" />
            </svg>
          </button>
        </form>
      </main>
    </div>`;
  }
}
